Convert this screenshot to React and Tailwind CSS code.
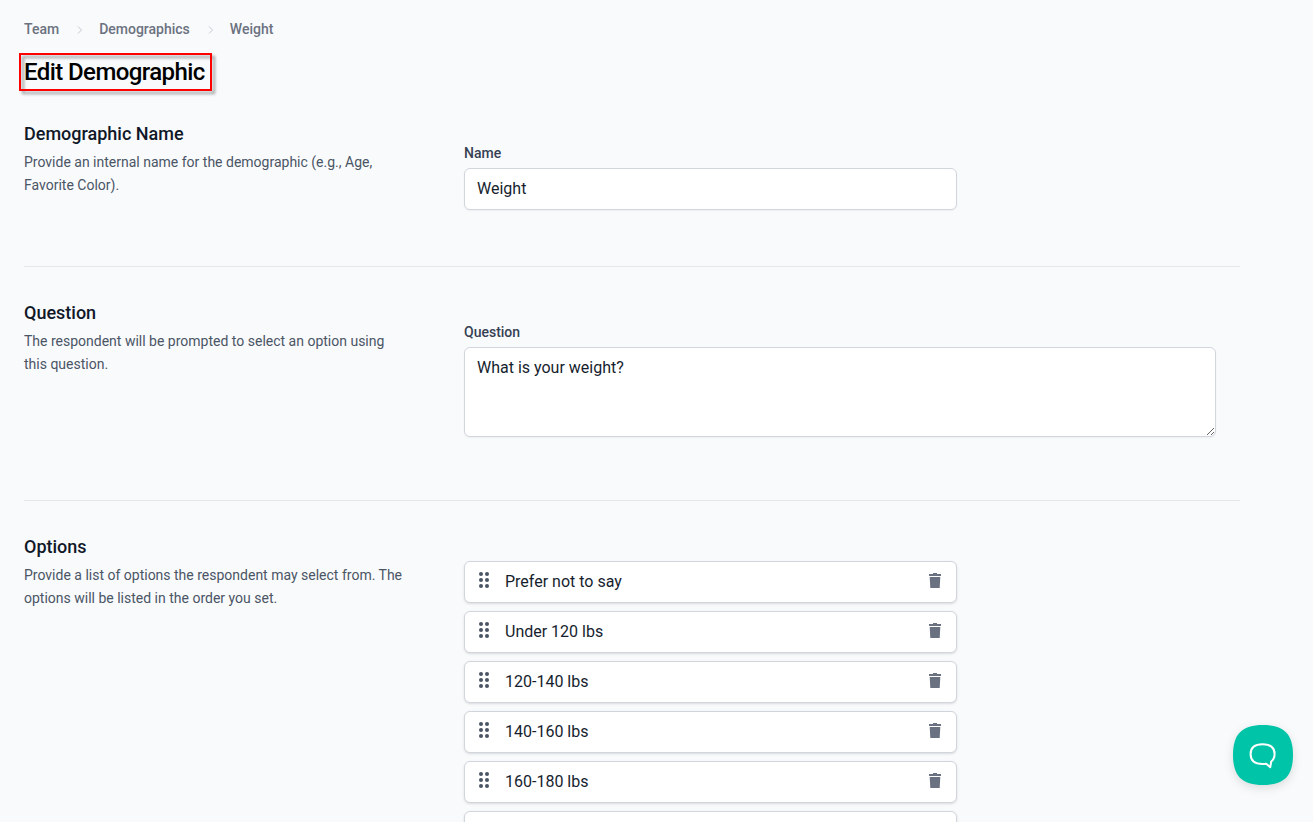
import { useState } from "react";

const initialOptions = [
  "Prefer not to say",
  "Under 120 lbs",
  "120-140 lbs",
  "140-160 lbs",
  "160-180 lbs",
  ""
];

function Chevron() {
  return (
    <svg className="w-1.5 h-2 ml-[18px] mr-4 mt-0.5 text-[#c3c8d0]" viewBox="0 0 6 8" fill="none" stroke="currentColor">
      <path d="M1 0.5 4.5 4 1 7.5" />
    </svg>
  );
}

function DragHandle() {
  return (
    <svg className="w-3 h-4 mb-1 text-gray-600 cursor-move" viewBox="0 0 12 16" fill="currentColor">
      {[2, 8, 14].map((y) => (
        <g key={y}>
          <circle cx="3" cy={y} r="2" />
          <circle cx="9" cy={y} r="2" />
        </g>
      ))}
    </svg>
  );
}

function TrashIcon() {
  return (
    <svg className="w-3 h-[15px]" viewBox="0 0 12 15" fill="currentColor">
      <path d="M4 0h4v1h4v2H0V1h4zM.7 4h10.6l-.6 11H1.3z" />
    </svg>
  );
}

function Section({ title, description, children }) {
  return (
    <section className="grid grid-cols-3 gap-8 pb-8">

      <div>
        <h3 className="text-lg leading-7 font-medium text-gray-900">{title}</h3>
        <p className="mt-[3px] text-sm leading-[22.75px] text-gray-600">{description}</p>
      </div>

      <div className="col-span-2 p-6">{children}</div>

    </section>
  );
}

export default function App() {

  const [name, setName] = useState("Weight");
  const [question, setQuestion] = useState("What is your weight?");
  const [options, setOptions] = useState(initialOptions);

  const removeOption = (option) => {
    setOptions(options.filter((o) => o !== option));
  };

  return (

    <div className="h-screen overflow-hidden bg-[#f9fafc] font-['Roboto',sans-serif] text-[#161e2e]">

      <main className="w-[1264px] px-6 pt-[19px]">

        <nav className="flex items-center text-sm leading-5 font-medium text-[#6b7280]">
          <a href="#team">Team</a>
          <Chevron />
          <a href="#demographics">Demographics</a>
          <Chevron />
          <a href="#weight">Weight</a>
        </nav>

        <div className="relative w-fit mt-[15px] mb-[30px]">
          <div className="absolute -left-[5px] -top-px w-[193px] h-[38px] border-2 border-[#ff0000] drop-shadow-[3px_3px_1.5px_rgba(0,0,0,0.4)]" />
          <h2 className="relative text-2xl leading-9 font-medium tracking-[-0.58px] text-black">
            Edit Demographic
          </h2>
        </div>

        <Section
          title="Demographic Name"
          description="Provide an internal name for the demographic (e.g., Age, Favorite Color)."
        >
          <div className="grid grid-cols-6 gap-6">
            <div className="col-span-4">
              <label htmlFor="name" className="block pb-0.5 text-sm leading-[18px] font-medium text-gray-700">
                Name
              </label>
              <input
                id="name"
                value={name}
                onChange={(e) => setName(e.target.value)}
                className="block mt-1 w-full h-[42px] px-3 pb-0.5 bg-white border border-gray-300 rounded-md shadow-xs text-base"
              />
            </div>
          </div>
        </Section>

        <hr className="mb-8 border-gray-200" />

        <Section
          title="Question"
          description="The respondent will be prompted to select an option using this question."
        >
          <label htmlFor="question" className="block pb-0.5 text-sm leading-[18px] font-medium text-gray-700">
            Question
          </label>
          <textarea
            id="question"
            value={question}
            onChange={(e) => setQuestion(e.target.value)}
            className="block mt-1 mb-[7px] w-full h-[90px] px-3 py-2 bg-white border border-gray-300 rounded-md shadow-xs text-base leading-6"
          />
        </Section>

        <hr className="mb-8 border-gray-200" />

        <Section
          title="Options"
          description="Provide a list of options the respondent may select from. The options will be listed in the order you set."
        >
          <div className="grid grid-cols-6 gap-6 mt-1">
            <ul className="col-span-4 flex flex-col gap-2">
              {options.map((option) => (
                <li
                  key={option}
                  className="flex items-center h-[42px] pl-[13px] pr-[15px] bg-white border border-gray-300 rounded-md shadow-sm"
                >
                  <DragHandle />
                  <span className="grow ml-[15px] text-base leading-6">{option}</span>
                  <button
                    aria-label="Remove option"
                    onClick={() => removeOption(option)}
                    className="mb-[3px] text-gray-500"
                  >
                    <TrashIcon />
                  </button>
                </li>
              ))}
            </ul>
          </div>
        </Section>

      </main>

      <button
        aria-label="Open chat"
        className="fixed right-5 bottom-[37px] w-[60px] h-[60px] drop-shadow-[0_3px_5px_rgba(0,0,0,0.12)]"
      >
        <svg className="w-full h-full" viewBox="0 0 60 60" fill="none">
          <path
            fill="#00c4a7"
            d="M30 0C51 0 60 9 60 30S51 60 30 60 0 51 0 30 9 0 30 0Z"
          />
          <path
            stroke="#fff"
            strokeWidth="2"
            strokeLinejoin="round"
            d="M29.5 19.2C37.5 19.2 41.6 22.3 41.6 29C41.6 32.2 40.4 34.8 38.2 36.5L37.3 42.2L33.2 38.7C32 38.9 30.8 39 29.5 39C21.5 39 17.6 35.5 17.6 29C17.6 22.3 21.5 19.2 29.5 19.2Z"
          />
        </svg>
      </button>

    </div>

  );
}
